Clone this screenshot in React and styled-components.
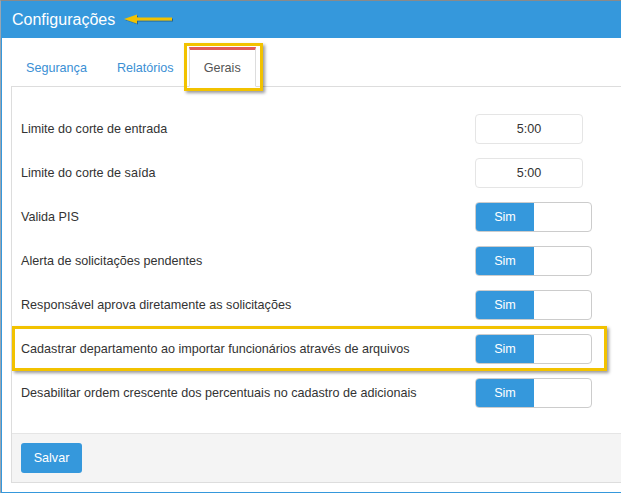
import styled, { createGlobalStyle, css } from "styled-components";

const Global = createGlobalStyle`
  html, body {
    margin: 0;
    padding: 0;
    background: #fff;
    overflow: hidden;
  }
  body {
    font-family: "Liberation Sans", Arial, Helvetica, sans-serif;
    color: #333;
  }
`;

const Screen = styled.div`
  border-top: 1px solid #8a8a8a;
  border-left: 1px solid #9aa6b2;
  width: 700px;
`;

const Panel = styled.div`
  border: 1px solid #3598dc;
  border-top: none;
  background: #fff;
`;

const Header = styled.div`
  height: 37px;
  background: #3598dc;
  display: flex;
  align-items: center;
  padding-left: 10px;
  gap: 8px;
`;

const Title = styled.div`
  color: #fff;
  font-size: 16px;
  line-height: 20px;
`;

const Body = styled.div`
  padding: 9px 0 9px 9px;
`;

const Tabs = styled.ul`
  list-style: none;
  margin: 0;
  padding: 0;
  display: flex;
  gap: 0;
  position: relative;
  z-index: 1;
`;

const highlightBox = css`
  &::after {
    content: "";
    position: absolute;
    border: 3px solid #f2c200;
    box-shadow: 2px 2px 3px rgba(0, 0, 0, 0.4);
    pointer-events: none;
  }
`;

const Tab = styled.li`
  position: relative;
  margin-bottom: -1px;
  ${(p) => p.$marked && highlightBox}
  &::after {
    top: -4px;
    left: -5px;
    right: -7px;
    bottom: -4px;
  }
`;

const TabLink = styled.a`
  display: block;
  padding: 10px 14px;
  font-size: 12.6px;
  line-height: 16px;
  border: 1px solid transparent;
  border-top: 3px solid transparent;
  color: #3b8fd4;
  text-decoration: none;
  ${(p) =>
    p.$active &&
    css`
      color: #555;
      background: #fff;
      border-color: #ddd;
      border-top-color: #e05a5a;
      border-bottom-color: #fff;
    `}
`;

const Content = styled.div`
  border: 1px solid #ddd;
`;

const Rows = styled.div`
  padding: 20px 9px 18px;
`;

const Row = styled.div`
  position: relative;
  height: 44px;
  display: grid;
  grid-template-columns: 454px auto;
  align-items: center;
  ${(p) => p.$marked && highlightBox}
  &::after {
    top: -1px;
    left: -9px;
    width: 589px;
    height: 39px;
  }
`;

const Label = styled.div`
  font-size: 12.6px;
  color: #333;
`;

const TimeInput = styled.div`
  width: 108px;
  height: 30px;
  box-sizing: border-box;
  border: 1px solid #e5e5e5;
  border-radius: 4px;
  display: flex;
  align-items: center;
  justify-content: center;
  font-size: 12.6px;
  color: #333;
`;

const Switch = styled.div`
  width: 117px;
  height: 30px;
  box-sizing: border-box;
  border: 1px solid #ccc;
  border-radius: 4px;
  overflow: hidden;
  display: flex;
`;

const SwitchOn = styled.div`
  width: 58px;
  background: #3598dc;
  color: #fff;
  font-size: 12.6px;
  display: flex;
  align-items: center;
  justify-content: center;
`;

const Footer = styled.div`
  background: #f4f4f4;
  border-top: 1px solid #e5e5e5;
  padding: 9px 9px 9px;
`;

const Button = styled.button`
  display: block;
  height: 30px;
  width: 61px;
  border: none;
  border-radius: 3px;
  background: #3598dc;
  color: #fff;
  font-family: inherit;
  font-size: 12.6px;
  padding: 0;
`;

const Arrow = () => (
  <svg width="52" height="14" viewBox="0 0 52 14" style={{ marginTop: 1 }}>
    <defs>
      <filter id="sh" x="-10%" y="-50%" width="130%" height="200%">
        <feDropShadow dx="1" dy="1" stdDeviation="0.6" floodColor="#000" floodOpacity="0.35" />
      </filter>
    </defs>
    <g filter="url(#sh)">
      <polygon points="1,6 14,1.5 14,10.5" fill="#f2c200" />
      <rect x="12" y="4.5" width="37" height="3" fill="#f2c200" />
    </g>
  </svg>
);

const settings = [
  { label: "Limite do corte de entrada", type: "time", value: "5:00" },
  { label: "Limite do corte de saída", type: "time", value: "5:00" },
  { label: "Valida PIS", type: "switch" },
  { label: "Alerta de solicitações pendentes", type: "switch" },
  { label: "Responsável aprova diretamente as solicitações", type: "switch" },
  { label: "Cadastrar departamento ao importar funcionários através de arquivos", type: "switch", marked: true },
  { label: "Desabilitar ordem crescente dos percentuais no cadastro de adicionais", type: "switch" },
];

export default function App() {
  return (
    <Screen>
      <Global />
      <Panel>
        <Header>
          <Title>Configurações</Title>
          <Arrow />
        </Header>
        <Body>
          <Tabs>
            <Tab><TabLink>Segurança</TabLink></Tab>
            <Tab><TabLink>Relatórios</TabLink></Tab>
            <Tab $marked><TabLink $active>Gerais</TabLink></Tab>
          </Tabs>
          <Content>
            <Rows>
              {settings.map((s) => (
                <Row key={s.label} $marked={s.marked}>
                  <Label>{s.label}</Label>
                  {s.type === "time" ? (
                    <TimeInput>{s.value}</TimeInput>
                  ) : (
                    <Switch>
                      <SwitchOn>Sim</SwitchOn>
                    </Switch>
                  )}
                </Row>
              ))}
            </Rows>
            <Footer>
              <Button>Salvar</Button>
            </Footer>
          </Content>
        </Body>
      </Panel>
    </Screen>
  );
}
